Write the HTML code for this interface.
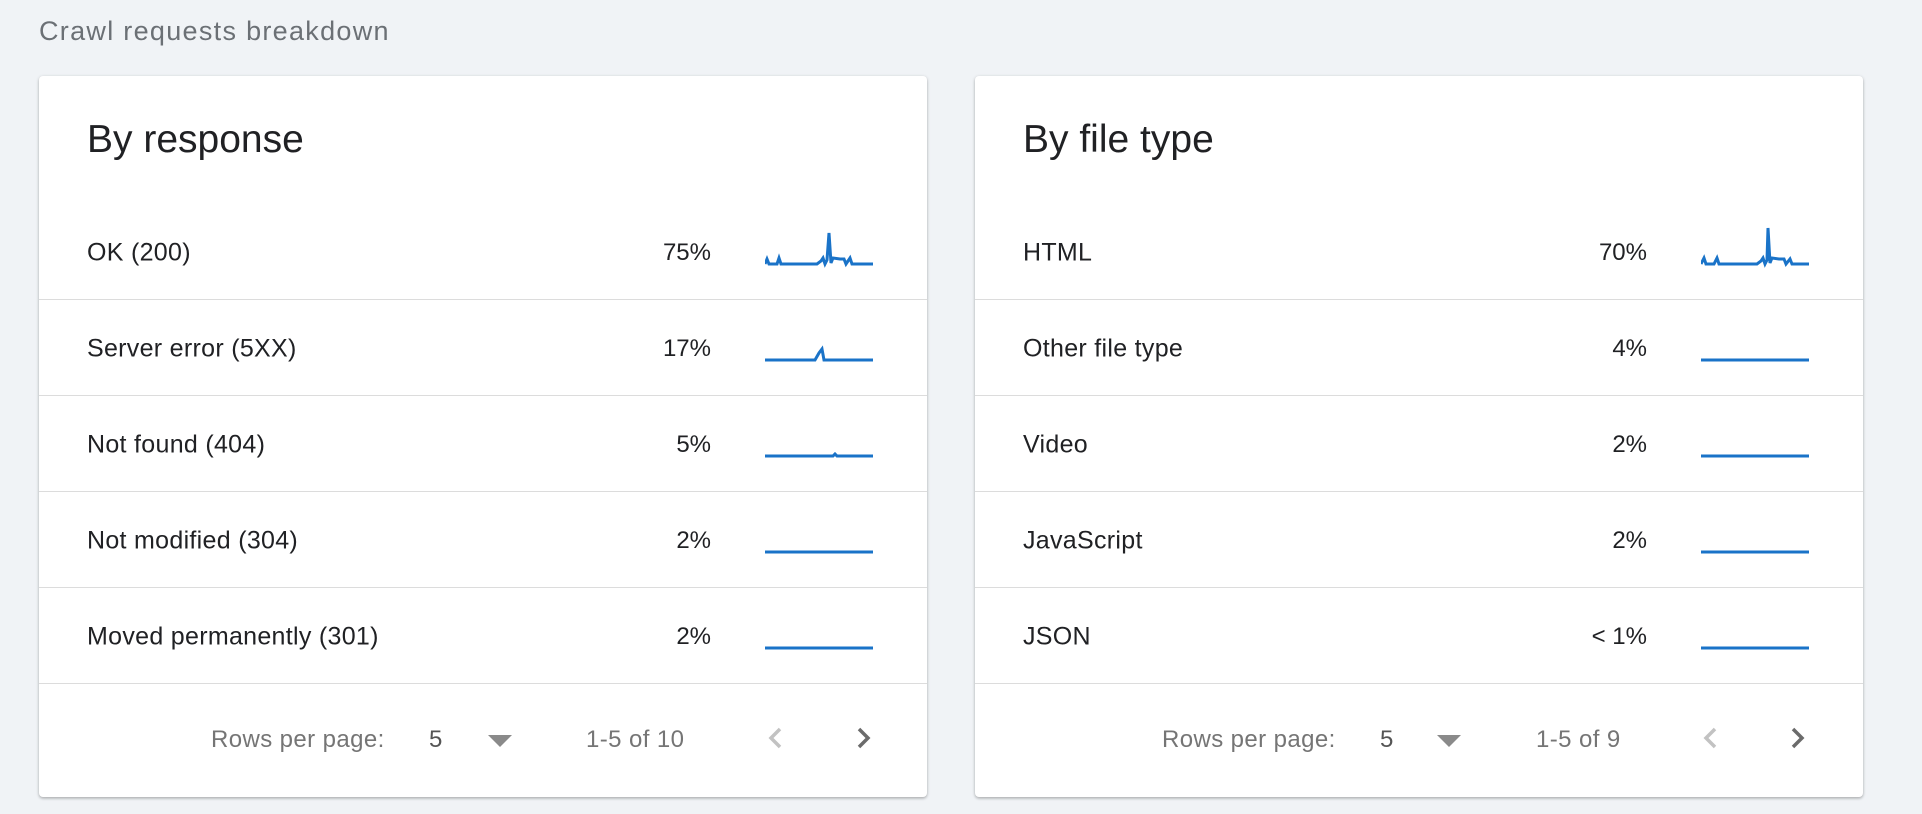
<!DOCTYPE html>
<html><head><style>
body{margin:0;width:1922px;height:814px;background:#f0f3f6;font-family:"Liberation Sans",Arial,sans-serif;position:relative;overflow:hidden}
.h{position:absolute;left:39px;top:16px;font-size:27px;letter-spacing:1.3px;color:#6b7075}
.card{position:absolute;top:76px;width:888px;height:721px;background:#fff;border-radius:4px;box-shadow:0 1px 3px rgba(0,0,0,.25),0 2px 2px rgba(0,0,0,.08)}
.t{position:absolute;left:48px;top:42px;font-size:39px;color:#202124}
.row{position:absolute;left:0;width:888px;height:96px;border-bottom:1.5px solid #dcdcdc}
.lab{position:absolute;left:48px;top:52%;transform:translateY(-50%);font-size:25px;letter-spacing:0.3px;color:#202124}
.pct{position:absolute;right:216px;top:52%;transform:translateY(-50%);font-size:24px;color:#202124}
.sp{position:absolute;left:726px;top:0}
.f{position:absolute;top:664px;font-size:24px;letter-spacing:0.4px;color:#757575;transform:translateY(-50%)}
</style></head><body>
<div class="h">Crawl requests breakdown</div>

<div class="card" style="left:39px">
<div class="t">By response</div>
<div class="row" style="top:127px"><span class="lab">OK (200)</span><span class="pct">75%</span>
<svg class="sp" width="110" height="96"><polyline fill="none" stroke="#1a73c8" stroke-width="3" points="0,61 2,56 4,61 12,61 14,55 16,61 52,61 56,58 58,55 60,61 62,57 64,30 66,60 68,55 75,56 79,56 81,61 85,55 87,61 108,61"/></svg></div>
<div class="row" style="top:223px"><span class="lab">Server error (5XX)</span><span class="pct">17%</span>
<svg class="sp" width="110" height="96"><polyline fill="none" stroke="#1a73c8" stroke-width="3" points="0,61 50,61 54,54 57,50 59,61 108,61"/></svg></div>
<div class="row" style="top:319px"><span class="lab">Not found (404)</span><span class="pct">5%</span>
<svg class="sp" width="110" height="96"><polyline fill="none" stroke="#1a73c8" stroke-width="3" points="0,61 68,61 70,59 72,61 108,61"/></svg></div>
<div class="row" style="top:415px"><span class="lab">Not modified (304)</span><span class="pct">2%</span>
<svg class="sp" width="110" height="96"><polyline fill="none" stroke="#1a73c8" stroke-width="3" points="0,61 108,61"/></svg></div>
<div class="row" style="top:511px"><span class="lab">Moved permanently (301)</span><span class="pct">2%</span>
<svg class="sp" width="110" height="96"><polyline fill="none" stroke="#1a73c8" stroke-width="3" points="0,61 108,61"/></svg></div>
<div class="f" style="left:172px">Rows per page:</div>
<div class="f" style="left:390px;color:#555">5</div>
<svg style="position:absolute;left:449px;top:659px" width="24" height="14"><polygon points="0,0 24,0 12,12" fill="#8a8a8a"/></svg>
<div class="f" style="left:547px">1-5 of 10</div>
<svg style="position:absolute;left:728px;top:651px" width="18" height="22"><polyline points="13,2 4,11 13,20" fill="none" stroke="#c2c2c2" stroke-width="3.5"/></svg>
<svg style="position:absolute;left:816px;top:651px" width="18" height="22"><polyline points="4,2 13,11 4,20" fill="none" stroke="#6b6b6b" stroke-width="3.5"/></svg>
</div>

<div class="card" style="left:975px">
<div class="t">By file type</div>
<div class="row" style="top:127px"><span class="lab">HTML</span><span class="pct">70%</span>
<svg class="sp" width="110" height="96"><polyline fill="none" stroke="#1a73c8" stroke-width="3" points="0,61 3,55 5,61 13,61 16,55 18,61 56,61 60,58 62,55 64,61 66,57 67,25 69,60 71,55 78,56 83,56 85,61 89,56 91,61 108,61"/></svg></div>
<div class="row" style="top:223px"><span class="lab">Other file type</span><span class="pct">4%</span>
<svg class="sp" width="110" height="96"><polyline fill="none" stroke="#1a73c8" stroke-width="3" points="0,61 108,61"/></svg></div>
<div class="row" style="top:319px"><span class="lab">Video</span><span class="pct">2%</span>
<svg class="sp" width="110" height="96"><polyline fill="none" stroke="#1a73c8" stroke-width="3" points="0,61 108,61"/></svg></div>
<div class="row" style="top:415px"><span class="lab">JavaScript</span><span class="pct">2%</span>
<svg class="sp" width="110" height="96"><polyline fill="none" stroke="#1a73c8" stroke-width="3" points="0,61 108,61"/></svg></div>
<div class="row" style="top:511px"><span class="lab">JSON</span><span class="pct">&lt; 1%</span>
<svg class="sp" width="110" height="96"><polyline fill="none" stroke="#1a73c8" stroke-width="3" points="0,61 108,61"/></svg></div>
<div class="f" style="left:187px">Rows per page:</div>
<div class="f" style="left:405px;color:#555">5</div>
<svg style="position:absolute;left:462px;top:659px" width="24" height="14"><polygon points="0,0 24,0 12,12" fill="#8a8a8a"/></svg>
<div class="f" style="left:561px">1-5 of 9</div>
<svg style="position:absolute;left:727px;top:651px" width="18" height="22"><polyline points="13,2 4,11 13,20" fill="none" stroke="#c2c2c2" stroke-width="3.5"/></svg>
<svg style="position:absolute;left:814px;top:651px" width="18" height="22"><polyline points="4,2 13,11 4,20" fill="none" stroke="#6b6b6b" stroke-width="3.5"/></svg>
</div>
</body></html>
